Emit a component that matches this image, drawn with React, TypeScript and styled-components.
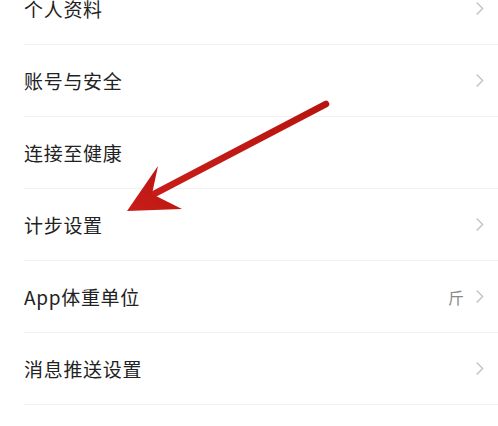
import styled, { createGlobalStyle } from 'styled-components';

const GlobalStyle = createGlobalStyle`
  html, body {
    margin: 0;
    padding: 0;
    background: #ffffff;
    overflow: hidden;
  }
  body {
    font-family: "Noto Sans CJK SC", "Noto Sans", sans-serif;
  }
`;

const Page = styled.div`
  position: relative;
  width: 498px;
  height: 426px;
  overflow: hidden;
  background: #fff;
`;

const List = styled.div`
  display: flex;
  flex-direction: column;
  margin-top: -27px;
`;

const Row = styled.div`
  display: flex;
  align-items: center;
  height: 71px;
  margin-left: 24px;
  padding-right: 14px;
  border-bottom: 1px solid #f0f0f0;
  box-sizing: content-box;
`;

const Label = styled.span`
  flex: 1;
  font-size: 19px;
  color: #222222;
  letter-spacing: 0.7px;
`;

const Value = styled.span`
  font-size: 16px;
  color: #8a8a8a;
  margin-right: 12px;
`;

const Chevron = styled.svg`
  width: 8px;
  height: 13px;
  display: block;
`;

const Arrow = styled.svg`
  position: absolute;
  left: 0;
  top: 0;
  pointer-events: none;
`;

type Item = { label: string; value?: string; chevron: boolean };

const items: Item[] = [
  { label: '个人资料', chevron: true },
  { label: '账号与安全', chevron: true },
  { label: '连接至健康', chevron: false },
  { label: '计步设置', chevron: true },
  { label: 'App体重单位', value: '斤', chevron: true },
  { label: '消息推送设置', chevron: true },
];

export default function App() {
  return (
    <Page>
      <GlobalStyle />
      <List>
        {items.map((it) => (
          <Row key={it.label}>
            <Label>{it.label}</Label>
            {it.value && <Value>{it.value}</Value>}
            {it.chevron && (
              <Chevron viewBox="0 0 8 13">
                <path d="M1.2 1 L6.6 6.5 L1.2 12" fill="none" stroke="#c4c4c4" strokeWidth="1.5" strokeLinecap="round" strokeLinejoin="round" />
              </Chevron>
            )}
          </Row>
        ))}
      </List>
      <Arrow width="498" height="426" viewBox="0 0 498 426">
        <defs>
          <linearGradient id="red" x1="0" y1="1" x2="1" y2="0">
            <stop offset="0" stopColor="#c81e1a" />
            <stop offset="1" stopColor="#b8140f" />
          </linearGradient>
        </defs>
        <line x1="154" y1="194" x2="326" y2="104" stroke="url(#red)" strokeWidth="6.5" strokeLinecap="round" />
        <polygon points="127,211 158,166 152,194 182,209" fill="url(#red)" />
      </Arrow>
    </Page>
  );
}
